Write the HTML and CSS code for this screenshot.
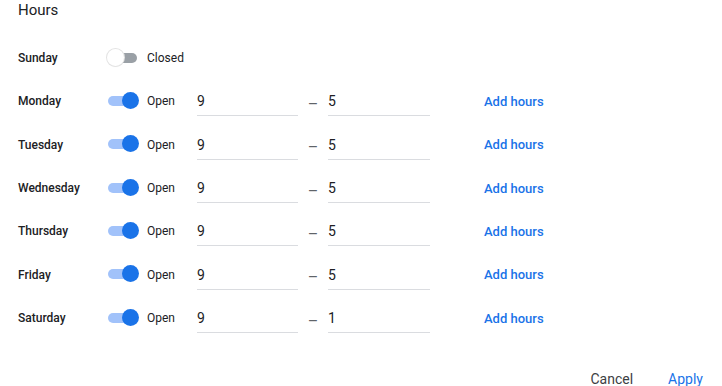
FILE: index.html
```html
<!DOCTYPE html>
<html lang="en">
<head>
  <meta charset="UTF-8" />
  <meta name="viewport" content="width=device-width, initial-scale=1.0"/>
  <title>Hours</title>
  <link rel="stylesheet" href="styles.css">
</head>
<body>
  <div class="dialog">
    <h1 class="title">Hours</h1>
    <div class="days">
      <div class="day">
        <span class="day-name">Sunday</span>
        <span class="toggle"><span class="track"></span><span class="thumb"></span></span>
        <span class="status">Closed</span>
      </div>
      <div class="day">
        <span class="day-name">Monday</span>
        <span class="toggle on"><span class="track"></span><span class="thumb"></span></span>
        <span class="status">Open</span>
        <input class="time from" type="text" value="9" />
        <span class="dash">–</span>
        <input class="time to" type="text" value="5" />
        <a class="add-hours" href="#">Add hours</a>
      </div>
      <div class="day">
        <span class="day-name">Tuesday</span>
        <span class="toggle on"><span class="track"></span><span class="thumb"></span></span>
        <span class="status">Open</span>
        <input class="time from" type="text" value="9" />
        <span class="dash">–</span>
        <input class="time to" type="text" value="5" />
        <a class="add-hours" href="#">Add hours</a>
      </div>
      <div class="day">
        <span class="day-name">Wednesday</span>
        <span class="toggle on"><span class="track"></span><span class="thumb"></span></span>
        <span class="status">Open</span>
        <input class="time from" type="text" value="9" />
        <span class="dash">–</span>
        <input class="time to" type="text" value="5" />
        <a class="add-hours" href="#">Add hours</a>
      </div>
      <div class="day">
        <span class="day-name">Thursday</span>
        <span class="toggle on"><span class="track"></span><span class="thumb"></span></span>
        <span class="status">Open</span>
        <input class="time from" type="text" value="9" />
        <span class="dash">–</span>
        <input class="time to" type="text" value="5" />
        <a class="add-hours" href="#">Add hours</a>
      </div>
      <div class="day">
        <span class="day-name">Friday</span>
        <span class="toggle on"><span class="track"></span><span class="thumb"></span></span>
        <span class="status">Open</span>
        <input class="time from" type="text" value="9" />
        <span class="dash">–</span>
        <input class="time to" type="text" value="5" />
        <a class="add-hours" href="#">Add hours</a>
      </div>
      <div class="day">
        <span class="day-name">Saturday</span>
        <span class="toggle on"><span class="track"></span><span class="thumb"></span></span>
        <span class="status">Open</span>
        <input class="time from" type="text" value="9" />
        <span class="dash">–</span>
        <input class="time to" type="text" value="1" />
        <a class="add-hours" href="#">Add hours</a>
      </div>
    </div>
    <div class="actions">
      <button class="btn cancel">Cancel</button>
      <button class="btn apply">Apply</button>
    </div>
  </div>
</body>
</html>
```

FILE: styles.css
```css
* {
  box-sizing: border-box;
}
html, body {
  margin: 0;
  padding: 0;
  background: #fff;
  font-family: Roboto, "Noto Sans", Arial, sans-serif;
  color: #202124;
}
.dialog {
  width: 722px;
  height: 386px;
  overflow: hidden;
}
.title {
  margin: 0;
  padding-left: 18px;
  height: 36.5px;
  line-height: 20px;
  font-size: 15px;
  font-weight: 400;
  color: #202124;
}
.days {
  padding-left: 18px;
}
.day {
  display: grid;
  grid-template-columns: 90px 39px 50px 101px 30px 102px 54px auto;
  grid-template-areas: "name toggle status from dash to gap add";
  align-items: center;
  height: 43.33px;
}
.day-name {
  grid-area: name;
  font-size: 12px;
  font-weight: 500;
}
.toggle {
  grid-area: toggle;
  position: relative;
  width: 30px;
  height: 17px;
}
.track {
  position: absolute;
  left: 0;
  top: 3px;
  width: 29px;
  height: 10px;
  border-radius: 5px;
  background: #9aa0a6;
}
.thumb {
  position: absolute;
  left: -1px;
  top: -1px;
  width: 17px;
  height: 17px;
  border-radius: 50%;
  background: #fff;
  box-shadow: 0 0 0 1px #e3e3e3, 0 1px 1px rgba(0, 0, 0, 0.08);
}
.toggle.on .track {
  background: #a1c2fa;
}
.toggle.on .thumb {
  left: 14px;
  background: #1a73e8;
  box-shadow: none;
}
.status {
  grid-area: status;
  font-size: 12px;
}
.time {
  width: 101px;
  height: 29px;
  margin-top: 1px;
  padding: 0;
  border: none;
  border-bottom: 1px solid #dadce0;
  outline: none;
  font-family: inherit;
  font-size: 14px;
  color: #202124;
  background: transparent;
}
.time.from {
  grid-area: from;
}
.time.to {
  grid-area: to;
  width: 102px;
}
.dash {
  grid-area: dash;
  text-align: center;
  font-size: 16px;
  color: #5f6368;
  padding-top: 6px;
}
.add-hours {
  grid-area: add;
  font-size: 13px;
  font-weight: 500;
  color: #1a73e8;
  text-decoration: none;
}
.actions {
  display: flex;
  justify-content: flex-end;
  gap: 35px;
  padding: 29px 19px 0 0;
}
.btn {
  padding: 0;
  border: none;
  background: none;
  font-family: inherit;
  font-size: 14px;
  font-weight: 400;
  line-height: 20px;
  cursor: pointer;
}
.cancel {
  color: #3c4043;
}
.apply {
  color: #1a73e8;
}
```
